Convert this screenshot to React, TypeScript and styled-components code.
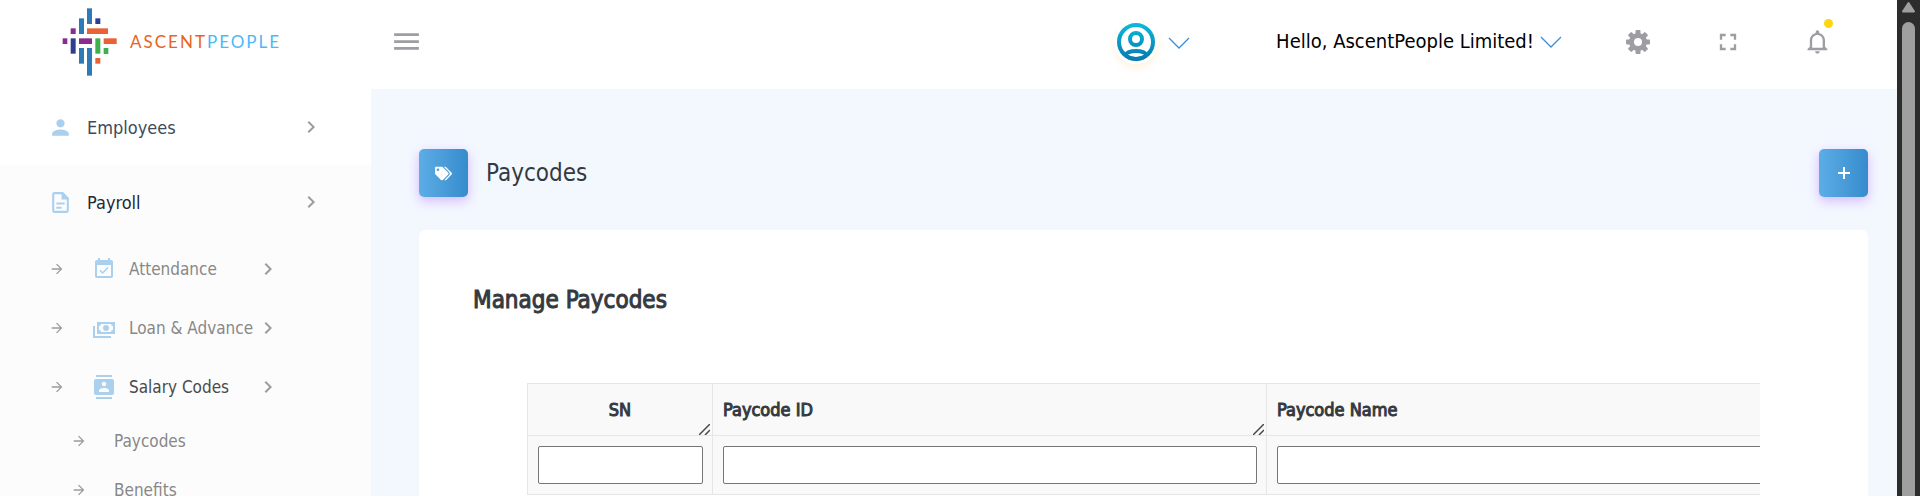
import React from 'react';
import styled, { createGlobalStyle } from 'styled-components';
import { FaTags } from 'react-icons/fa';
import {
  MdArrowForward,
  MdChevronRight,
  MdContacts,
  MdEventAvailable,
  MdFullscreen,
  MdMenu,
  MdPerson,
} from 'react-icons/md';

const GlobalStyle = createGlobalStyle`
  *, *::before, *::after { box-sizing: border-box; }
  body {
    margin: 0;
    overflow: hidden;
    font-family: "DejaVu Sans Condensed", "DejaVu Sans", sans-serif;
    font-size: 18px;
    color: #343a40;
    background: #f3f8ff;
  }
  button { font: inherit; color: inherit; background: none; border: 0; padding: 0; cursor: pointer; }
  a { color: inherit; text-decoration: none; }
  svg { display: block; flex: none; }
`;

const Shell = styled.div`
  display: flex;
  height: 100vh;
  overflow: hidden;
`;

/* ---------- sidebar ---------- */

const Sidebar = styled.aside`
  flex: none;
  width: 371px;
  background: #fff;
`;

const Brand = styled.a`
  display: flex;
  align-items: center;
  gap: 12px;
  height: 89px;
  padding: 0 0 6px 62px;
`;

const Wordmark = styled.span`
  font: 17px/20px Lato, sans-serif;
  letter-spacing: 2px;
  color: #e8641b;
`;

const WordmarkTail = styled.span`
  color: #4db8f5;
`;

const Menu = styled.ul`
  list-style: none;
  margin: 0;
  padding: 0;
`;

const MenuGroup = styled.li<{ $open?: boolean }>`
  background: ${(p) => (p.$open ? '#fcfcfc' : '#fff')};
`;

const MenuButton = styled.button<{ $active?: boolean }>`
  display: flex;
  align-items: center;
  width: 100%;
  height: ${(p) => (p.$active ? 74 : 76)}px;
  padding: 0 48px;
  text-align: left;
  color: ${(p) => (p.$active ? '#1f2937' : '#3e4b5b')};
`;

const SubButton = styled.button<{ $active?: boolean }>`
  display: flex;
  align-items: center;
  width: 100%;
  height: 59px;
  padding: 0 91px 0 49px;
  font-size: 17px;
  text-align: left;
  white-space: nowrap;
  color: ${(p) => (p.$active ? '#4a4a4a' : '#888')};
`;

const LeafLink = styled.a`
  display: flex;
  align-items: center;
  gap: 27px;
  height: 49px;
  padding-left: 71px;
  font-size: 17px;
  color: #888;
`;

const MenuIcon = styled.span<{ $nested?: boolean }>`
  flex: none;
  margin-left: ${(p) => (p.$nested ? 27 : 0)}px;
  margin-right: ${(p) => (p.$nested ? 13 : 14)}px;
  color: #aad0ee;
`;

const Muted = styled.span`
  color: #9c9c9c;
`;

const Label = styled.span`
  flex: 1;
  min-width: 0;
`;

/* ---------- top bar ---------- */

const Body = styled.div`
  flex: 1;
  min-width: 0;
`;

const TopBar = styled.header`
  display: flex;
  align-items: center;
  gap: 62px;
  height: 89px;
  padding: 0 65px 6px 19px;
  background: #fff;
`;

const IconButton = styled.button`
  position: relative;
  flex: none;
  color: #9d9da3;
`;

const AccountButton = styled.button`
  display: flex;
  align-items: center;
  gap: 10px;
  margin: 0 24px 0 auto;
`;

const Avatar = styled.span`
  padding: 3px;
  border-radius: 50%;
  box-shadow: 0 4px 8px #fdf3e0;
`;

const Greeting = styled.button`
  display: flex;
  align-items: center;
  gap: 6px;
  padding-bottom: 2px;
  font-size: 20px;
  line-height: 24px;
  white-space: nowrap;
  color: #000;
`;

const Dot = styled.span`
  position: absolute;
  top: -9px;
  right: -1px;
  width: 9px;
  height: 9px;
  border-radius: 50%;
  background: #ffd60f;
`;

/* ---------- page ---------- */

const Content = styled.main`
  padding: 60px 29px 0 48px;
`;

const PageHead = styled.div`
  display: flex;
  align-items: center;
  gap: 18px;
  margin-bottom: 33px;
`;

const tile = `
  display: flex;
  align-items: center;
  justify-content: center;
  width: 49px;
  height: 48px;
  border-radius: 5px;
  color: #fff;
  background: linear-gradient(to right, #5dade6, #368ccc);
  box-shadow: 0 4px 12px rgba(172, 90, 255, 0.4);
`;

const Tile = styled.span`${tile}`;

const AddButton = styled.button`
  ${tile}
  margin-left: auto;
`;

const PageTitle = styled.h1`
  margin: 0;
  font-size: 24px;
  line-height: 32px;
  font-weight: 400;
`;

const Card = styled.section`
  padding: 54px;
  min-height: 400px;
  border-radius: 6px;
  background: #fff;
`;

const CardTitle = styled.h2`
  margin: 0 0 67px;
  font-size: 24px;
  line-height: 32px;
  font-weight: 400;
  -webkit-text-stroke: 1px;
`;

const TableWrap = styled.div`
  margin: 0 54px;
  overflow: hidden;
`;

const Table = styled.table`
  table-layout: fixed;
  width: 1293px;
  border-collapse: collapse;
  background: #f9f9f9;
`;

const HeadCell = styled.th<{ $center?: boolean }>`
  position: relative;
  height: 52px;
  padding: 0 10px;
  border: 1px solid #e6e6e6;
  font-size: 18px;
  font-weight: 400;
  -webkit-text-stroke: 1px;
  text-align: ${(p) => (p.$center ? 'center' : 'left')};
`;

const Grip = styled.svg`
  position: absolute;
  right: 2px;
  bottom: 0;
`;

const FilterCell = styled.td`
  height: 59px;
  padding: 0 9px 0 10px;
  border: 1px solid #e6e6e6;
`;

const FilterInput = styled.input`
  display: block;
  width: 100%;
  height: 38px;
  padding: 0 8px;
  border: 1px solid #767676;
  border-radius: 2px;
  font: inherit;
  background: #fff;
`;

/* ---------- scroll rail ---------- */

const Rail = styled.div`
  flex: none;
  display: flex;
  flex-direction: column;
  align-items: center;
  gap: 9px;
  width: 23px;
  padding-top: 1px;
  background: #2c2c2c;
`;

const Thumb = styled.div`
  flex: 1;
  width: 13px;
  border-radius: 7px 7px 0 0;
  background: #9f9f9f;
`;

/* ---------- drawings ---------- */

const logoBars: [string, number, number, number, number][] = [
  ['#2e7ab8', 95, 25, 15, 47],
  ['#2e7ab8', 71, 55, 15, 47],
  ['#2e7ab8', 71, 144, 15, 47],
  ['#2e7ab8', 95, 144, 15, 83],
  ['#2f3c92', 120, 55, 15, 17],
  ['#2f3c92', 46, 115, 15, 46],
  ['#8a2c8e', 46, 85, 15, 17],
  ['#8a2c8e', 22, 115, 14, 17],
  ['#8a2c8e', 71, 115, 39, 17],
  ['#ea6138', 95, 85, 63, 17],
  ['#ea6138', 145, 115, 39, 17],
  ['#ea6138', 120, 174, 15, 17],
  ['#3cb04c', 120, 115, 15, 46],
  ['#3cb04c', 145, 144, 14, 18],
];

const Logo = () => (
  <svg width="56" height="68" viewBox="20 24 168 204" aria-hidden="true">
    {logoBars.map(([fill, x, y, w, h]) => (
      <rect key={`${x}-${y}`} x={x} y={y} width={w} height={h} fill={fill} />
    ))}
  </svg>
);

const DocIcon = () => (
  <svg width="25" height="25" viewBox="0 0 24 24" fill="none" aria-hidden="true">
    <path d="M14 3H6a1 1 0 0 0-1 1v16a1 1 0 0 0 1 1h12a1 1 0 0 0 1-1V8z" stroke="currentColor" strokeWidth="2" />
    <path d="M13 2h1l6 6v1h-7z" fill="currentColor" />
    <path d="M8 13h8M8 17h5" stroke="currentColor" strokeWidth="2" />
  </svg>
);

const CashIcon = () => (
  <svg width="24" height="24" viewBox="0 0 24 24" fill="currentColor" aria-hidden="true">
    <path d="M5 6h18v12H5V6m9 3a3 3 0 0 1 3 3 3 3 0 0 1-3 3 3 3 0 0 1-3-3 3 3 0 0 1 3-3M9 8a2 2 0 0 1-2 2v4a2 2 0 0 1 2 2h10a2 2 0 0 1 2-2v-4a2 2 0 0 1-2-2H9m-8 2h2v10h16v2H1V10Z" />
  </svg>
);

const GearIcon = () => (
  <svg width="28" height="28" viewBox="-14 -14 28 28" aria-hidden="true">
    <g fill="currentColor">
      {[0, 45, 90, 135].map((a) => (
        <rect key={a} x="-2.500" y="-12" width="5" height="24" rx="1" transform={`rotate(${a})`} />
      ))}
      <circle r="9" />
    </g>
    <circle r="4" fill="#fff" />
  </svg>
);

const BellIcon = () => (
  <svg width="28" height="28" viewBox="0 0 24 24" fill="currentColor" aria-hidden="true">
    <path d="M16 17H7v-6.500C7 8 9 6 11.500 6S16 8 16 10.500V17m2-1v-5.500c0-3.070-2.130-5.640-5-6.320V3.500A1.500 1.500 0 0 0 11.500 2 1.500 1.500 0 0 0 10 3.500v.680c-2.870.680-5 3.250-5 6.320V16l-2 2v1h17v-1l-2-2m-6.500 6a2 2 0 0 0 2-2h-4a2 2 0 0 0 2 2Z" />
  </svg>
);

const AvatarIcon = () => (
  <svg width="38" height="38" viewBox="0 0 38 38" fill="none" aria-hidden="true">
    <defs>
      <linearGradient id="avatar" x1="0" y1="0" x2="0" y2="38" gradientUnits="userSpaceOnUse">
        <stop offset="0" stopColor="#0bbbd9" />
        <stop offset="1" stopColor="#0779ae" />
      </linearGradient>
      <clipPath id="avatar-clip"><circle cx="19" cy="19" r="18" /></clipPath>
    </defs>
    <circle cx="19" cy="19" r="19" fill="#fff" />
    <ellipse cx="19" cy="32" rx="10" ry="4" stroke="url(#avatar)" strokeWidth="4" clipPath="url(#avatar-clip)" />
    <circle cx="19" cy="16" r="6" stroke="url(#avatar)" strokeWidth="4" />
    <circle cx="19" cy="19" r="17" stroke="url(#avatar)" strokeWidth="4" />
  </svg>
);

const Caret = () => (
  <svg width="22" height="14" viewBox="0 0 22 14" fill="none" aria-hidden="true">
    <path d="M1 3l10 10L21 3" stroke="#3a8edb" strokeWidth="1.300" />
  </svg>
);

const PlusIcon = () => (
  <svg width="12" height="12" viewBox="0 0 12 12" aria-hidden="true">
    <path d="M6 0v12M0 6h12" stroke="#fff" strokeWidth="2" />
  </svg>
);

const ResizeGrip = () => (
  <Grip width="11" height="11" viewBox="0 0 11 11" fill="none" aria-hidden="true">
    <path d="M0 11L11 0M6 11l5-5" stroke="#4a4a4a" strokeWidth="1.500" />
  </Grip>
);

/* ---------- content ---------- */

const subItems = [
  { label: 'Attendance', icon: <MdEventAvailable size={24} /> },
  { label: 'Loan & Advance', icon: <CashIcon /> },
  { label: 'Salary Codes', icon: <MdContacts size={24} />, active: true },
];

const columns = [
  { label: 'SN', width: 185, center: true, grip: true },
  { label: 'Paycode ID', width: 554, grip: true },
  { label: 'Paycode Name', width: 554 },
];

export default function App() {
  return (
    <Shell>
      <GlobalStyle />
      <Sidebar>
        <Brand href="#home">
          <Logo />
          <Wordmark>
            ASCENT<WordmarkTail>PEOPLE</WordmarkTail>
          </Wordmark>
        </Brand>
        <nav>
          <Menu>
            <MenuGroup>
              <MenuButton type="button">
                <MenuIcon><MdPerson size={25} /></MenuIcon>
                <Label>Employees</Label>
                <Muted><MdChevronRight size={24} /></Muted>
              </MenuButton>
            </MenuGroup>
            <MenuGroup $open>
              <MenuButton type="button" $active>
                <MenuIcon><DocIcon /></MenuIcon>
                <Label>Payroll</Label>
                <Muted><MdChevronRight size={24} /></Muted>
              </MenuButton>
              <Menu>
                {subItems.map((item) => (
                  <li key={item.label}>
                    <SubButton type="button" $active={item.active}>
                      <Muted><MdArrowForward size={16} /></Muted>
                      <MenuIcon $nested>{item.icon}</MenuIcon>
                      <Label>{item.label}</Label>
                      <Muted><MdChevronRight size={24} /></Muted>
                    </SubButton>
                  </li>
                ))}
                {['Paycodes', 'Benefits'].map((label) => (
                  <li key={label}>
                    <LeafLink href={`#${label.toLowerCase()}`}>
                      <Muted><MdArrowForward size={16} /></Muted>
                      {label}
                    </LeafLink>
                  </li>
                ))}
              </Menu>
            </MenuGroup>
          </Menu>
        </nav>
      </Sidebar>

      <Body>
        <TopBar>
          <IconButton type="button" aria-label="Toggle menu"><MdMenu size={33} /></IconButton>
          <AccountButton type="button" aria-label="Account">
            <Avatar><AvatarIcon /></Avatar>
            <Caret />
          </AccountButton>
          <Greeting type="button">
            Hello, AscentPeople Limited!
            <Caret />
          </Greeting>
          <IconButton type="button" aria-label="Settings"><GearIcon /></IconButton>
          <IconButton type="button" aria-label="Full screen"><MdFullscreen size={28} /></IconButton>
          <IconButton type="button" aria-label="Notifications">
            <BellIcon />
            <Dot />
          </IconButton>
        </TopBar>

        <Content>
          <PageHead>
            <Tile><FaTags size={17} /></Tile>
            <PageTitle>Paycodes</PageTitle>
            <AddButton type="button" aria-label="Add paycode"><PlusIcon /></AddButton>
          </PageHead>
          <Card>
            <CardTitle>Manage Paycodes</CardTitle>
            <TableWrap>
              <Table>
                <colgroup>
                  {columns.map((c) => <col key={c.label} width={c.width} />)}
                </colgroup>
                <thead>
                  <tr>
                    {columns.map((c) => (
                      <HeadCell key={c.label} scope="col" $center={c.center}>
                        {c.label}
                        {c.grip && <ResizeGrip />}
                      </HeadCell>
                    ))}
                  </tr>
                </thead>
                <tbody>
                  <tr>
                    {columns.map((c) => (
                      <FilterCell key={c.label}>
                        <FilterInput type="text" aria-label={`Filter by ${c.label}`} />
                      </FilterCell>
                    ))}
                  </tr>
                </tbody>
              </Table>
            </TableWrap>
          </Card>
        </Content>
      </Body>

      <Rail aria-hidden="true">
        <svg width="15" height="12" viewBox="0 0 15 12">
          <path d="M7.500 2L13 10.500H2z" fill="#9f9f9f" stroke="#9f9f9f" strokeWidth="2" strokeLinejoin="round" />
        </svg>
        <Thumb />
      </Rail>
    </Shell>
  );
}
